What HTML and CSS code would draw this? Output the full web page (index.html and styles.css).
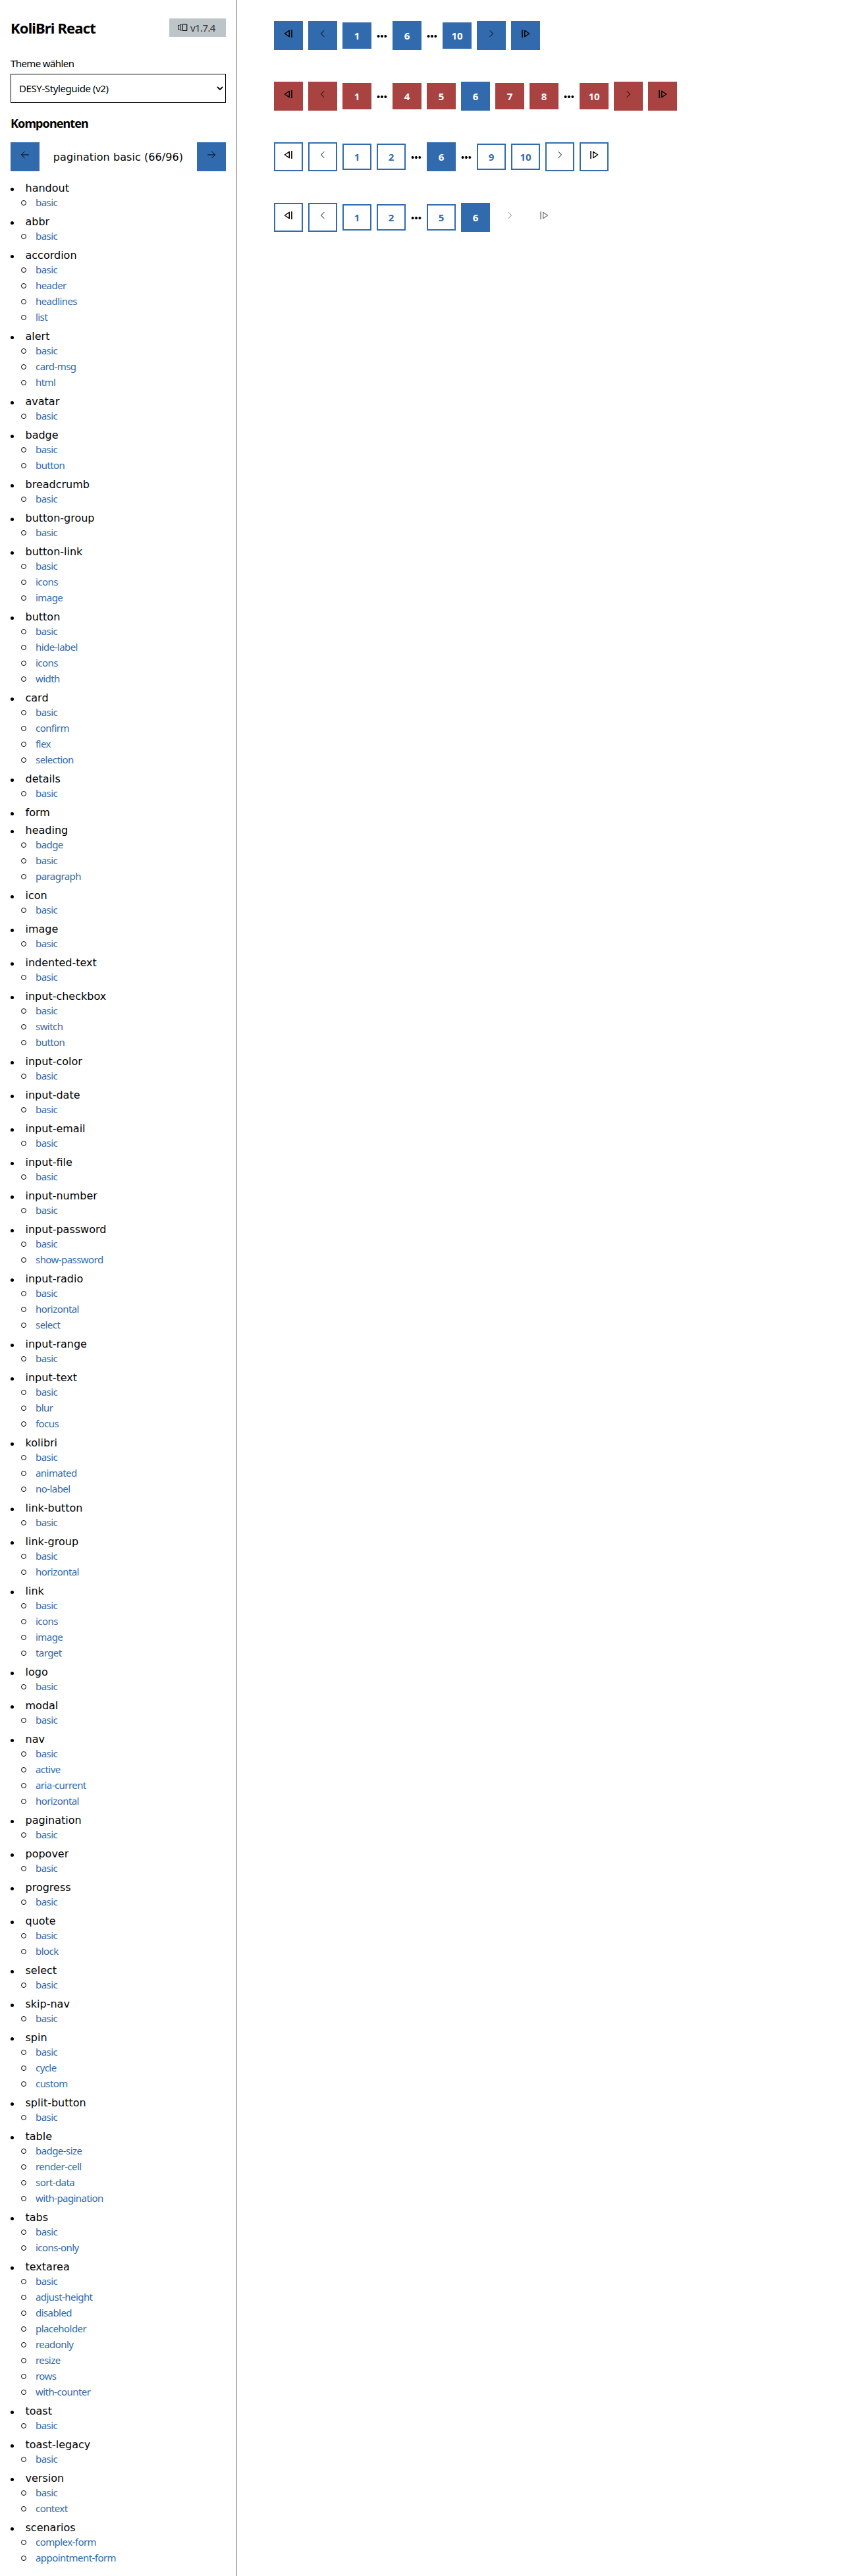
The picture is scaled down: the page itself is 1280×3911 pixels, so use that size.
FILE: index.html
```html
<!DOCTYPE html>
<html lang="de">
<head>
<meta charset="utf-8">
<title>KoliBri React</title>
<link rel="stylesheet" href="styles.css">
</head>
<body>
<svg class="sprite" aria-hidden="true">
  <symbol id="first" viewBox="0 0 14 14"><path d="M8.3 2.3V11.7L1.3 7Z" fill="none" stroke="currentColor" stroke-width="1.4" stroke-linejoin="round"/><path d="M11.9 1V13" stroke="currentColor" stroke-width="1.6"/></symbol>
  <symbol id="last" viewBox="0 0 14 14"><path d="M5.7 2.3V11.7L12.7 7Z" fill="none" stroke="currentColor" stroke-width="1.4" stroke-linejoin="round"/><path d="M2.1 1V13" stroke="currentColor" stroke-width="1.6"/></symbol>
  <symbol id="prev" viewBox="0 0 14 14"><path d="M9.2 2.2L4.5 7L9.2 11.8" fill="none" stroke="currentColor"/></symbol>
  <symbol id="next" viewBox="0 0 14 14"><path d="M4.8 2.2L9.5 7L4.8 11.8" fill="none" stroke="currentColor"/></symbol>
  <symbol id="left" viewBox="0 0 14 14"><path d="M13 7H1.6M6.5 1.8L1.3 7L6.5 12.2" fill="none" stroke="currentColor"/></symbol>
  <symbol id="right" viewBox="0 0 14 14"><path d="M1 7H12.4M7.5 1.8L12.7 7L7.5 12.2" fill="none" stroke="currentColor"/></symbol>
</svg>
<div class="app">
<aside class="sidebar">
  <header class="head">
    <h1>KoliBri React</h1>
    <span class="badge"><svg width="15" height="12" viewBox="0 0 15 12" fill="none" stroke="#000"><path d="M2.5 2.5H.5V8.5H2.5M5.5 1.5H3.7V10H5.5"/><rect x="7.2" y="1" width="6.6" height="9.5" rx=".5" stroke-width="1.1"/></svg>v1.7.4</span>
  </header>
  <label class="label">Theme wählen</label>
  <div class="select"><span>DESY-Styleguide (v2)</span><svg width="10" height="8" viewBox="0 0 10 8"><path d="M1 2L5 6L9 2" fill="none" stroke="#000" stroke-width="1.8"/></svg></div>
  <h2>Komponenten</h2>
  <div class="stepper">
    <button class="btn"><svg><use href="#left"/></svg></button>
    <span>pagination basic (66/96)</span>
    <button class="btn"><svg><use href="#right"/></svg></button>
  </div>
  <ul class="tree">
    <li>handout<ul><li>basic</li></ul></li>
    <li>abbr<ul><li>basic</li></ul></li>
    <li>accordion<ul><li>basic</li><li>header</li><li>headlines</li><li>list</li></ul></li>
    <li>alert<ul><li>basic</li><li>card-msg</li><li>html</li></ul></li>
    <li>avatar<ul><li>basic</li></ul></li>
    <li>badge<ul><li>basic</li><li>button</li></ul></li>
    <li>breadcrumb<ul><li>basic</li></ul></li>
    <li>button-group<ul><li>basic</li></ul></li>
    <li>button-link<ul><li>basic</li><li>icons</li><li>image</li></ul></li>
    <li>button<ul><li>basic</li><li>hide-label</li><li>icons</li><li>width</li></ul></li>
    <li>card<ul><li>basic</li><li>confirm</li><li>flex</li><li>selection</li></ul></li>
    <li>details<ul><li>basic</li></ul></li>
    <li>form</li>
    <li>heading<ul><li>badge</li><li>basic</li><li>paragraph</li></ul></li>
    <li>icon<ul><li>basic</li></ul></li>
    <li>image<ul><li>basic</li></ul></li>
    <li>indented-text<ul><li>basic</li></ul></li>
    <li>input-checkbox<ul><li>basic</li><li>switch</li><li>button</li></ul></li>
    <li>input-color<ul><li>basic</li></ul></li>
    <li>input-date<ul><li>basic</li></ul></li>
    <li>input-email<ul><li>basic</li></ul></li>
    <li>input-file<ul><li>basic</li></ul></li>
    <li>input-number<ul><li>basic</li></ul></li>
    <li>input-password<ul><li>basic</li><li>show-password</li></ul></li>
    <li>input-radio<ul><li>basic</li><li>horizontal</li><li>select</li></ul></li>
    <li>input-range<ul><li>basic</li></ul></li>
    <li>input-text<ul><li>basic</li><li>blur</li><li>focus</li></ul></li>
    <li>kolibri<ul><li>basic</li><li>animated</li><li>no-label</li></ul></li>
    <li>link-button<ul><li>basic</li></ul></li>
    <li>link-group<ul><li>basic</li><li>horizontal</li></ul></li>
    <li>link<ul><li>basic</li><li>icons</li><li>image</li><li>target</li></ul></li>
    <li>logo<ul><li>basic</li></ul></li>
    <li>modal<ul><li>basic</li></ul></li>
    <li>nav<ul><li>basic</li><li>active</li><li>aria-current</li><li>horizontal</li></ul></li>
    <li>pagination<ul><li>basic</li></ul></li>
    <li>popover<ul><li>basic</li></ul></li>
    <li>progress<ul><li>basic</li></ul></li>
    <li>quote<ul><li>basic</li><li>block</li></ul></li>
    <li>select<ul><li>basic</li></ul></li>
    <li>skip-nav<ul><li>basic</li></ul></li>
    <li>spin<ul><li>basic</li><li>cycle</li><li>custom</li></ul></li>
    <li>split-button<ul><li>basic</li></ul></li>
    <li>table<ul><li>badge-size</li><li>render-cell</li><li>sort-data</li><li>with-pagination</li></ul></li>
    <li>tabs<ul><li>basic</li><li>icons-only</li></ul></li>
    <li>textarea<ul><li>basic</li><li>adjust-height</li><li>disabled</li><li>placeholder</li><li>readonly</li><li>resize</li><li>rows</li><li>with-counter</li></ul></li>
    <li>toast<ul><li>basic</li></ul></li>
    <li>toast-legacy<ul><li>basic</li></ul></li>
    <li>version<ul><li>basic</li><li>context</li></ul></li>
    <li>scenarios<ul><li>complex-form</li><li>appointment-form</li></ul></li>
  </ul>
</aside>
<main class="content">
  <nav class="pages">
    <button class="btn"><svg><use href="#first"/></svg></button><button class="btn"><svg><use href="#prev"/></svg></button>
    <button class="btn num">1</button><i></i><button class="btn current">6</button><i></i><button class="btn num">10</button>
    <button class="btn"><svg><use href="#next"/></svg></button><button class="btn"><svg><use href="#last"/></svg></button>
  </nav>
  <nav class="pages danger">
    <button class="btn"><svg><use href="#first"/></svg></button><button class="btn"><svg><use href="#prev"/></svg></button>
    <button class="btn num">1</button><i></i><button class="btn num">4</button><button class="btn num">5</button><button class="btn current">6</button><button class="btn num">7</button><button class="btn num">8</button><i></i><button class="btn num">10</button>
    <button class="btn"><svg><use href="#next"/></svg></button><button class="btn"><svg><use href="#last"/></svg></button>
  </nav>
  <nav class="pages outline">
    <button class="btn"><svg><use href="#first"/></svg></button><button class="btn"><svg><use href="#prev"/></svg></button>
    <button class="btn num">1</button><button class="btn num">2</button><i></i><button class="btn current">6</button><i></i><button class="btn num">9</button><button class="btn num">10</button>
    <button class="btn"><svg><use href="#next"/></svg></button><button class="btn"><svg><use href="#last"/></svg></button>
  </nav>
  <nav class="pages outline">
    <button class="btn"><svg><use href="#first"/></svg></button><button class="btn"><svg><use href="#prev"/></svg></button>
    <button class="btn num">1</button><button class="btn num">2</button><i></i><button class="btn num">5</button><button class="btn current">6</button>
    <button class="btn off"><svg><use href="#next"/></svg></button><button class="btn off"><svg><use href="#last"/></svg></button>
  </nav>
</main>
</div>
</body>
</html>
```
FILE: styles.css
```css
* { box-sizing: border-box; }
body { margin: 0; background: #fff; color: #000; font: 15px/20px "Noto Sans", sans-serif; letter-spacing: -.6px; }
.sprite { display: none; }
.app { display: flex; height: 3911px; }
.sidebar { width: 360px; flex: none; padding: 28px 16px 0; border-right: 1px solid #808080; }
.head { display: flex; justify-content: space-between; height: 28px; align-items: center; }
h1 { margin: 0; font-size: 22px; line-height: 28px; letter-spacing: -.85px; }
h2 { margin: 19px 0 0; height: 41px; font-size: 18px; line-height: 24px; letter-spacing: -.9px; }
.badge { display: flex; align-items: center; gap: 4px; width: 86px; height: 28px; padding-left: 13px; background: #bec5c9; color: #333; }
.label { display: block; height: 28px; margin-top: 28px; line-height: 24px; }
.select { display: flex; justify-content: space-between; align-items: center; height: 44px; padding: 0 3px 0 12px; border: 1px solid #000; letter-spacing: -.4px; }
.stepper { display: flex; justify-content: space-between; align-items: center; font-family: "DejaVu Sans", sans-serif; font-size: 16px; letter-spacing: .08px; }
.stepper span { padding-top: 2px; }
.btn { display: flex; align-items: center; justify-content: center; width: 44px; height: 44px; padding: 0; border: 2px solid #316bae; border-radius: 0; background: #316bae; color: #fff; font: 700 15px/20px "Noto Sans", sans-serif; letter-spacing: -.2px; }
.btn svg { width: 14px; height: 14px; margin-bottom: 6px; color: #000; }
.num { height: 40px; }

.tree { margin: 8px 0 0; }
.tree, .tree ul { padding: 0; list-style: none; }
.tree ul { margin: 0 0 0 -7px; }
.tree > li { position: relative; padding: 9px 0 0 22.5px; font: 16px/18px "DejaVu Sans", sans-serif; letter-spacing: 0; }
.tree > li::before { content: ""; position: absolute; left: 0; top: 16.6px; width: 5.4px; height: 5.4px; border-radius: 50%; background: #000; }
.tree ul li { position: relative; padding-left: 22.5px; color: #316bae; font: 15px/24px "Noto Sans", sans-serif; letter-spacing: -.56px; }
.tree ul li::before { content: ""; position: absolute; left: 0; top: 9px; width: 6px; height: 6px; border: 1px solid #000; border-radius: 50%; }

.content { padding: 32px 0 0 56px; }
.pages { display: flex; align-items: center; gap: 8px; height: 44px; margin-bottom: 48px; }
.pages i { width: 16px; height: 4px; margin-top: 1px; background: radial-gradient(circle at 2.5px 2px, #000 1.7px, transparent 2.2px) 0 0 / 5.4px 4px repeat-x; }
.danger .btn:not(.current) { background: #a94342; border-color: #a94342; }
.outline .btn:not(.current) { background: #fff; color: #316bae; }
.outline .btn.off { border-color: transparent; opacity: .5; }
```
